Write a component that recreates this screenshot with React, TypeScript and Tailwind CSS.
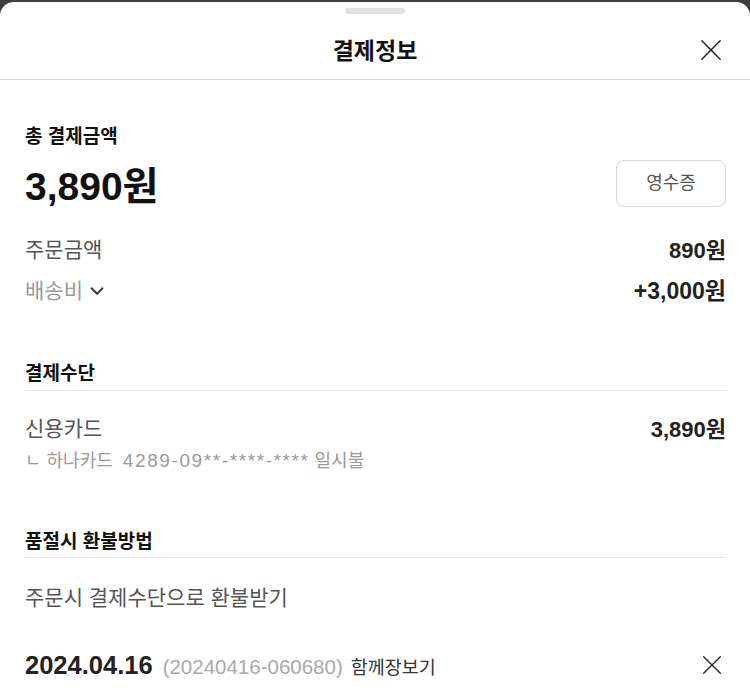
import { ChevronDown } from 'lucide-react'

const font = { fontFamily: '"Liberation Sans", "Noto Sans CJK KR", sans-serif' }

function CloseIcon({ size }: { size: number }) {
	return (
		<svg width={size} height={size} viewBox="0 0 24 24" fill="none" stroke="#222" strokeWidth="1.6" strokeLinecap="round">
			<path d="M2 2L22 22M22 2L2 22" />
		</svg>
	)
}

export default function App() {
	return (
		<div className="w-[750px] h-[696px] overflow-hidden bg-[#3f3f3f]" style={font}>
			<div className="mt-[2px] h-[694px] bg-white rounded-t-[14px] flex flex-col">
				<div className="flex justify-center pt-[6px]">
					<div className="w-[60px] h-[6px] rounded-full bg-[#e2e2e2]" />
				</div>
				<header className="relative h-[66px] flex items-center justify-center border-b border-[#d6d6d6]">
					<h1 className="text-[23px] font-bold text-[#111] mt-[10px]">결제정보</h1>
					<button className="absolute right-[28px] top-[25px]">
						<CloseIcon size={22} />
					</button>
				</header>

				<div className="pl-[25px] pr-[24px]">
					<div className="mt-[44px] h-[26px] flex items-center text-[19px] font-bold text-[#111]">총 결제금액</div>
					<div className="mt-[10px] h-[47px] flex items-center justify-between">
						<span className="text-[39px] leading-none font-bold text-[#111] pt-[5px]">3,890원</span>
						<button className="w-[110px] h-[47px] rounded-[8px] border border-[#d9d9d9] text-[18px] text-[#555]">영수증</button>
					</div>

					<div className="mt-[28px] h-[30px] flex items-center justify-between text-[21px]">
						<span className="text-[#555]">주문금액</span>
						<span className="text-[22px] font-bold text-[#222]">890원</span>
					</div>
					<div className="mt-[11px] h-[30px] flex items-center justify-between text-[21px]">
						<span className="flex items-center gap-[3px] text-[#9a9a9a]">
							배송비
							<ChevronDown size={22} strokeWidth={2} color="#333" />
						</span>
						<span className="text-[23px] font-bold text-[#222]">+3,000원</span>
					</div>

					<div className="mt-[55px] h-[30px] flex items-start border-b border-[#e6e6e6] text-[19px] leading-[26px] font-bold text-[#111]">결제수단</div>
					<div className="mt-[23px] h-[30px] flex items-center justify-between text-[21px]">
						<span className="text-[#555]">신용카드</span>
						<span className="text-[22px] font-bold text-[#222]">3,890원</span>
					</div>
					<div className="mt-[4px] h-[26px] flex items-center text-[18px] text-[#9a9a9a] whitespace-pre">
						ㄴ 하나카드{'  '}<span className="text-[19px] tracking-[1.6px]">4289-09**-****-****</span> 일시불
					</div>

					<div className="mt-[55px] h-[29px] flex items-start border-b border-[#e6e6e6] text-[19px] leading-[26px] font-bold text-[#111]">품절시 환불방법</div>
					<div className="mt-[25px] h-[30px] flex items-center text-[21px] text-[#555]">주문시 결제수단으로 환불받기</div>

					<div className="mt-[37px] h-[30px] flex items-center justify-between">
						<div className="flex items-baseline gap-[10px]">
							<span className="text-[25.5px] font-bold text-[#222]">2024.04.16</span>
							<span className="text-[20.5px] text-[#aaa]">(20240416-060680)</span>
							<span className="text-[18.5px] text-[#333] -ml-[2px]">함께장보기</span>
						</div>
						<button className="mr-[4px]">
							<CloseIcon size={20} />
						</button>
					</div>
				</div>
			</div>
		</div>
	)
}
